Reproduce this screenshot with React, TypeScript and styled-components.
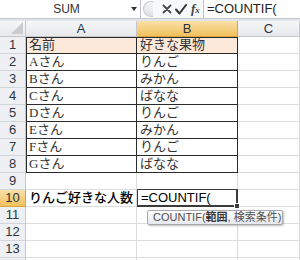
import React from 'react';
import styled, {createGlobalStyle} from 'styled-components';

const GlobalStyle = createGlobalStyle`
    html, body {
        margin: 0;
        padding: 0;
        background: #fff;
    }
    body {
        width: 300px;
        height: 260px;
        overflow: hidden;
        font-family: "Liberation Sans", "Noto Sans CJK JP", sans-serif;
    }
`

const rows: [string, string][] = [
    ['名前', '好きな果物'],
    ['Aさん', 'りんご'],
    ['Bさん', 'みかん'],
    ['Cさん', 'ばなな'],
    ['Dさん', 'りんご'],
    ['Eさん', 'みかん'],
    ['Fさん', 'りんご'],
    ['Gさん', 'ばなな'],
    ['', ''],
    ['りんご好きな人数', '=COUNTIF('],
    ['', ''],
    ['', ''],
    ['', ''],
];

export default function App() {
    return (
        <Window>
            <GlobalStyle/>
            <FormulaBar>
                <NameBox>
                    <NameText>SUM</NameText>
                    <DropArrow/>
                </NameBox>
                <Splitter/>
                <Icons>
                    <svg width="10" height="10" viewBox="0 0 10 10">
                        <path d="M1.5 1.5 L8.5 8.5 M8.5 1.5 L1.5 8.5" stroke="#4a4a4a" strokeWidth="1.8" strokeLinecap="round"/>
                    </svg>
                    <svg width="12" height="11" viewBox="0 0 12 11">
                        <path d="M1 5.5 L4.5 9.5 L11 1" stroke="#333" strokeWidth="2" fill="none" strokeLinecap="round" strokeLinejoin="round"/>
                    </svg>
                    <Fx>f<small>x</small></Fx>
                </Icons>
                <FormulaInput>=COUNTIF(</FormulaInput>
            </FormulaBar>
            <Band/>
            <Sheet>
                <Corner>
                    <svg width="12" height="12" viewBox="0 0 12 12">
                        <path d="M12 0 L12 12 L0 12 Z" fill="#c9cccf"/>
                    </svg>
                </Corner>
                <ColHead>A</ColHead>
                <ColHead $active>B</ColHead>
                <ColHead>C</ColHead>
                {rows.map(([a, b], i) => {
                    const n = i + 1;
                    const inTable = n <= 8;
                    return (
                        <React.Fragment key={n}>
                            <RowHead $active={n === 10}>{n}</RowHead>
                            <Cell $boxed={inTable} $top={n === 1} $left={inTable} $fill={n === 1} $strong={n === 10}>{a}</Cell>
                            {n === 10 ? (
                                <ActiveCell>{b}</ActiveCell>
                            ) : (
                                <Cell $boxed={inTable} $top={n === 1} $fill={n === 1}>{b}</Cell>
                            )}
                            <Cell/>
                        </React.Fragment>
                    );
                })}
                <RowHead/>
                <Cell/>
                <Cell/>
                <Cell/>
                <Tooltip>COUNTIF(<b>範囲</b>, 検索条件)</Tooltip>
            </Sheet>
        </Window>
    );
}

const Window = styled.div`
    width: 300px;
    height: 260px;
    overflow: hidden;
    display: flex;
    flex-direction: column;
    background: #fff;
`

const FormulaBar = styled.div`
    display: flex;
    height: 18px;
    border-bottom: 1px solid #c3c8cf;
    background: #fff;
    flex-shrink: 0;
`

const NameBox = styled.div`
    width: 141px;
    display: flex;
    align-items: center;
    border-right: 1px solid #c0c4ca;
    box-sizing: border-box;
`

const NameText = styled.span`
    flex: 1;
    text-align: center;
    font-size: 12px;
    color: #333;
    padding-left: 2px;
`

const DropArrow = styled.span`
    width: 0;
    height: 0;
    margin-right: 3px;
    border-left: 3px solid transparent;
    border-right: 3px solid transparent;
    border-top: 4px solid #333;
`

const Splitter = styled.div`
    width: 9px;
    margin: 1px 0 1px 2px;
    border-radius: 9px 0 0 9px;
    border: 1px solid #c4c8cd;
    border-right: none;
    background: linear-gradient(#f4f5f6, #dfe2e6);
`

const Icons = styled.div`
    width: 50px;
    display: flex;
    align-items: center;
    gap: 3px;
    padding-left: 9px;
    box-sizing: border-box;
    background: #f7f8f9;
    overflow: hidden;
`

const Fx = styled.span`
    font-family: "Liberation Serif", serif;
    font-style: italic;
    font-weight: bold;
    font-size: 13px;
    color: #444;
    margin-left: 1px;
    small {
        font-size: 9px;
    }
`

const FormulaInput = styled.div`
    flex: 1;
    border-left: 1px solid #c0c4ca;
    padding-left: 3px;
    font-size: 13px;
    line-height: 18px;
    color: #222;
    white-space: nowrap;
`

const Band = styled.div`
    height: 2px;
    background: #e1e5ea;
    flex-shrink: 0;
`

const Sheet = styled.div`
    position: relative;
    display: grid;
    grid-template-columns: 26px 111px 101px 1fr;
    grid-template-rows: 16px repeat(14, 17px);
`

const headBg = 'linear-gradient(#f6f7f8, #e6e8eb)';
const activeBg = 'linear-gradient(#f9e0a8, #f1c15c)';

const Corner = styled.div`
    background: ${headBg};
    border-right: 1px solid #c4c8cd;
    border-bottom: 1px solid #c4c8cd;
    box-sizing: border-box;
    display: flex;
    align-items: flex-end;
    justify-content: flex-end;
    padding: 0 2px 2px 0;
`

const ColHead = styled.div<{ $active?: boolean }>`
    background: ${p => p.$active ? activeBg : headBg};
    border-right: 1px solid ${p => p.$active ? '#d9a440' : '#c4c8cd'};
    border-bottom: 1px solid ${p => p.$active ? '#d9a440' : '#c4c8cd'};
    box-sizing: border-box;
    text-align: center;
    font-size: 13px;
    line-height: 15px;
    color: #2b3540;
`

const RowHead = styled.div<{ $active?: boolean }>`
    background: ${p => p.$active ? activeBg : '#eef0f3'};
    border-right: 1px solid ${p => p.$active ? '#d9a440' : '#c4c8cd'};
    border-bottom: 1px solid ${p => p.$active ? '#d9a440' : '#d2d6db'};
    box-sizing: border-box;
    text-align: center;
    font-size: 13px;
    line-height: 16px;
    color: #2b3540;
`

const Cell = styled.div<{ $boxed?: boolean; $top?: boolean; $left?: boolean; $fill?: boolean; $strong?: boolean }>`
    background: ${p => p.$fill ? '#fde9d9' : '#fff'};
    border-right: 1px solid ${p => p.$boxed ? '#2a2a2a' : '#dadcdd'};
    border-bottom: 1px solid ${p => p.$boxed ? '#2a2a2a' : '#dadcdd'};
    box-shadow: ${p => [
        p.$top ? 'inset 0 1px 0 #2a2a2a' : '',
        p.$left ? 'inset 1px 0 0 #2a2a2a' : '',
    ].filter(Boolean).join(', ') || 'none'};
    box-sizing: border-box;
    padding-left: 3px;
    font-family: "Liberation Serif", "Noto Sans CJK JP", serif;
    font-size: 13px;
    line-height: 16px;
    color: ${p => p.$strong ? '#000' : '#333'};
    font-weight: ${p => p.$strong ? 500 : 400};
    white-space: nowrap;
    overflow: visible;
`

const ActiveCell = styled.div`
    position: relative;
    background: #fff;
    box-shadow: inset 0 0 0 1px #3c3c3c;
    border-right: 1px solid #3c3c3c;
    border-bottom: 1px solid #3c3c3c;
    box-sizing: border-box;
    margin-top: -1px;
    padding: 1px 0 0 4px;
    font-family: "Liberation Sans", sans-serif;
    font-size: 13px;
    line-height: 16px;
    color: #000;
    white-space: nowrap;

    &::after {
        content: "";
        position: absolute;
        right: -3px;
        bottom: -3px;
        width: 4px;
        height: 4px;
        background: #3c3c3c;
        border: 1px solid #fff;
    }
`

const Tooltip = styled.div`
    position: absolute;
    left: 147px;
    top: 189px;
    width: 136px;
    height: 15px;
    box-sizing: border-box;
    border: 1px solid #a7a9ad;
    border-radius: 2px;
    background: linear-gradient(#ffffff, #e6e8ef);
    box-shadow: 1px 1px 2px rgba(0, 0, 0, 0.25);
    padding: 0 0 0 5px;
    font-family: "Liberation Sans", "Noto Sans CJK JP", sans-serif;
    font-size: 11px;
    line-height: 13px;
    color: #4f4f4f;
    white-space: nowrap;

    b {
        color: #333;
    }
`
